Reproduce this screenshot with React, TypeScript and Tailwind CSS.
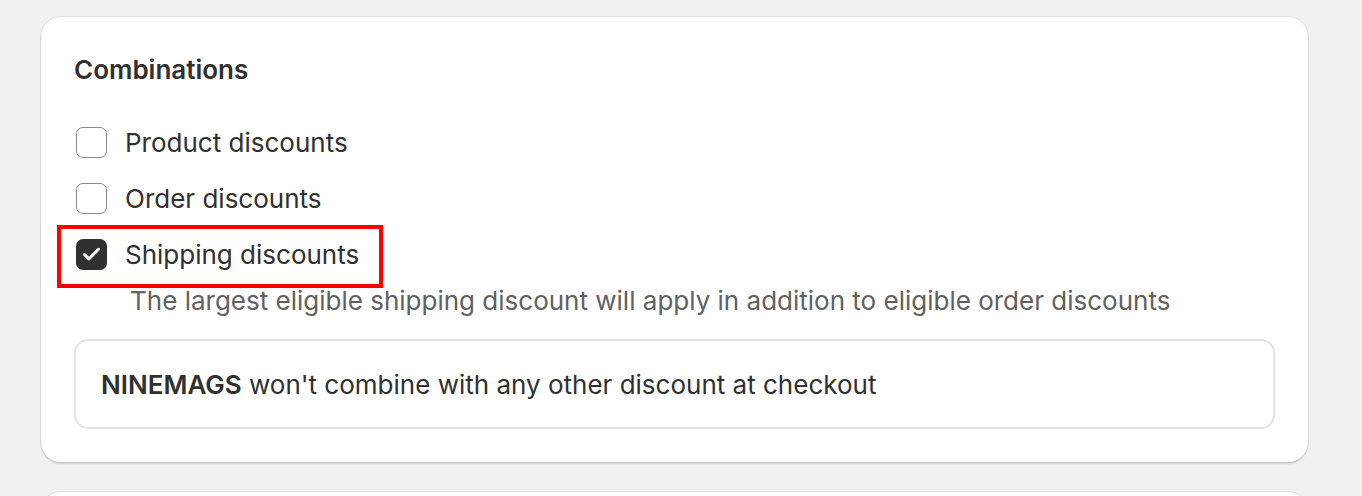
import { Check } from 'lucide-react';

// ============================================================================
// Data
// ============================================================================

type Option = { id: string; label: string; checked: boolean; highlight?: boolean };

const options: Option[] = [
  { id: 'product', label: 'Product discounts', checked: false },
  { id: 'order', label: 'Order discounts', checked: false },
  { id: 'shipping', label: 'Shipping discounts', checked: true, highlight: true },
];

// ============================================================================
// Components
// ============================================================================

function Checkbox({ checked }: { checked: boolean }) {
  if (checked) {
    return (
      <span className="flex h-[31px] w-[31px] shrink-0 items-center justify-center rounded-[7px] bg-[#303030]">
        <Check className="h-[21px] w-[21px] text-white" strokeWidth={3.4} />
      </span>
    );
  }
  return (
    <span className="block h-[31px] w-[31px] shrink-0 rounded-[7px] border-[1.5px] border-[#8a8a8a] bg-white" />
  );
}

function OptionRow({ option }: { option: Option }) {
  return (
    <div className="relative flex h-[56px] items-center gap-[18px] pl-[2px]">
      {option.highlight && (
        <span className="pointer-events-none absolute left-[-17px] top-[-1px] h-[63px] w-[326px] border-[4px] border-[#ff0000]" />
      )}
      <Checkbox checked={option.checked} />
      <span className="text-[26px] text-[#303030]">{option.label}</span>
    </div>
  );
}

// ============================================================================
// Page
// ============================================================================

export default function App() {
  return (
    <div
      className="h-[496px] overflow-hidden bg-[#f1f1f1] pt-[17px]"
      style={{ fontFamily: 'Inter, "Noto Sans", sans-serif' }}
    >
      <div className="ml-[41px] w-[1267px] rounded-[20px] bg-white px-[33px] pb-[33px] pt-[37px] shadow-[0_2px_2px_rgba(0,0,0,0.12),0_0_0_1px_rgba(0,0,0,0.07)]">
        <h2 className="text-[26px] font-semibold leading-[32px] text-[#303030]">Combinations</h2>

        <div className="mt-[28px] flex flex-col">
          {options.map((o) => (
            <OptionRow key={o.id} option={o} />
          ))}
        </div>

        <p className="mt-[2px] pl-[56px] text-[26px] leading-[34px] text-[#616161]">
          The largest eligible shipping discount will apply in addition to eligible order discounts
        </p>

        <div className="mt-[21px] flex h-[90px] items-center rounded-[14px] border-2 border-[#e3e3e3] px-[25px]">
          <span className="text-[26px] text-[#303030]">
            <span className="font-semibold">NINEMAGS</span> won't combine with any other discount at checkout
          </span>
        </div>
      </div>

      <div className="ml-[41px] mt-[30px] h-[60px] w-[1267px] rounded-[20px] bg-white shadow-[0_2px_2px_rgba(0,0,0,0.12),0_0_0_1px_rgba(0,0,0,0.07)]" />
    </div>
  );
}
